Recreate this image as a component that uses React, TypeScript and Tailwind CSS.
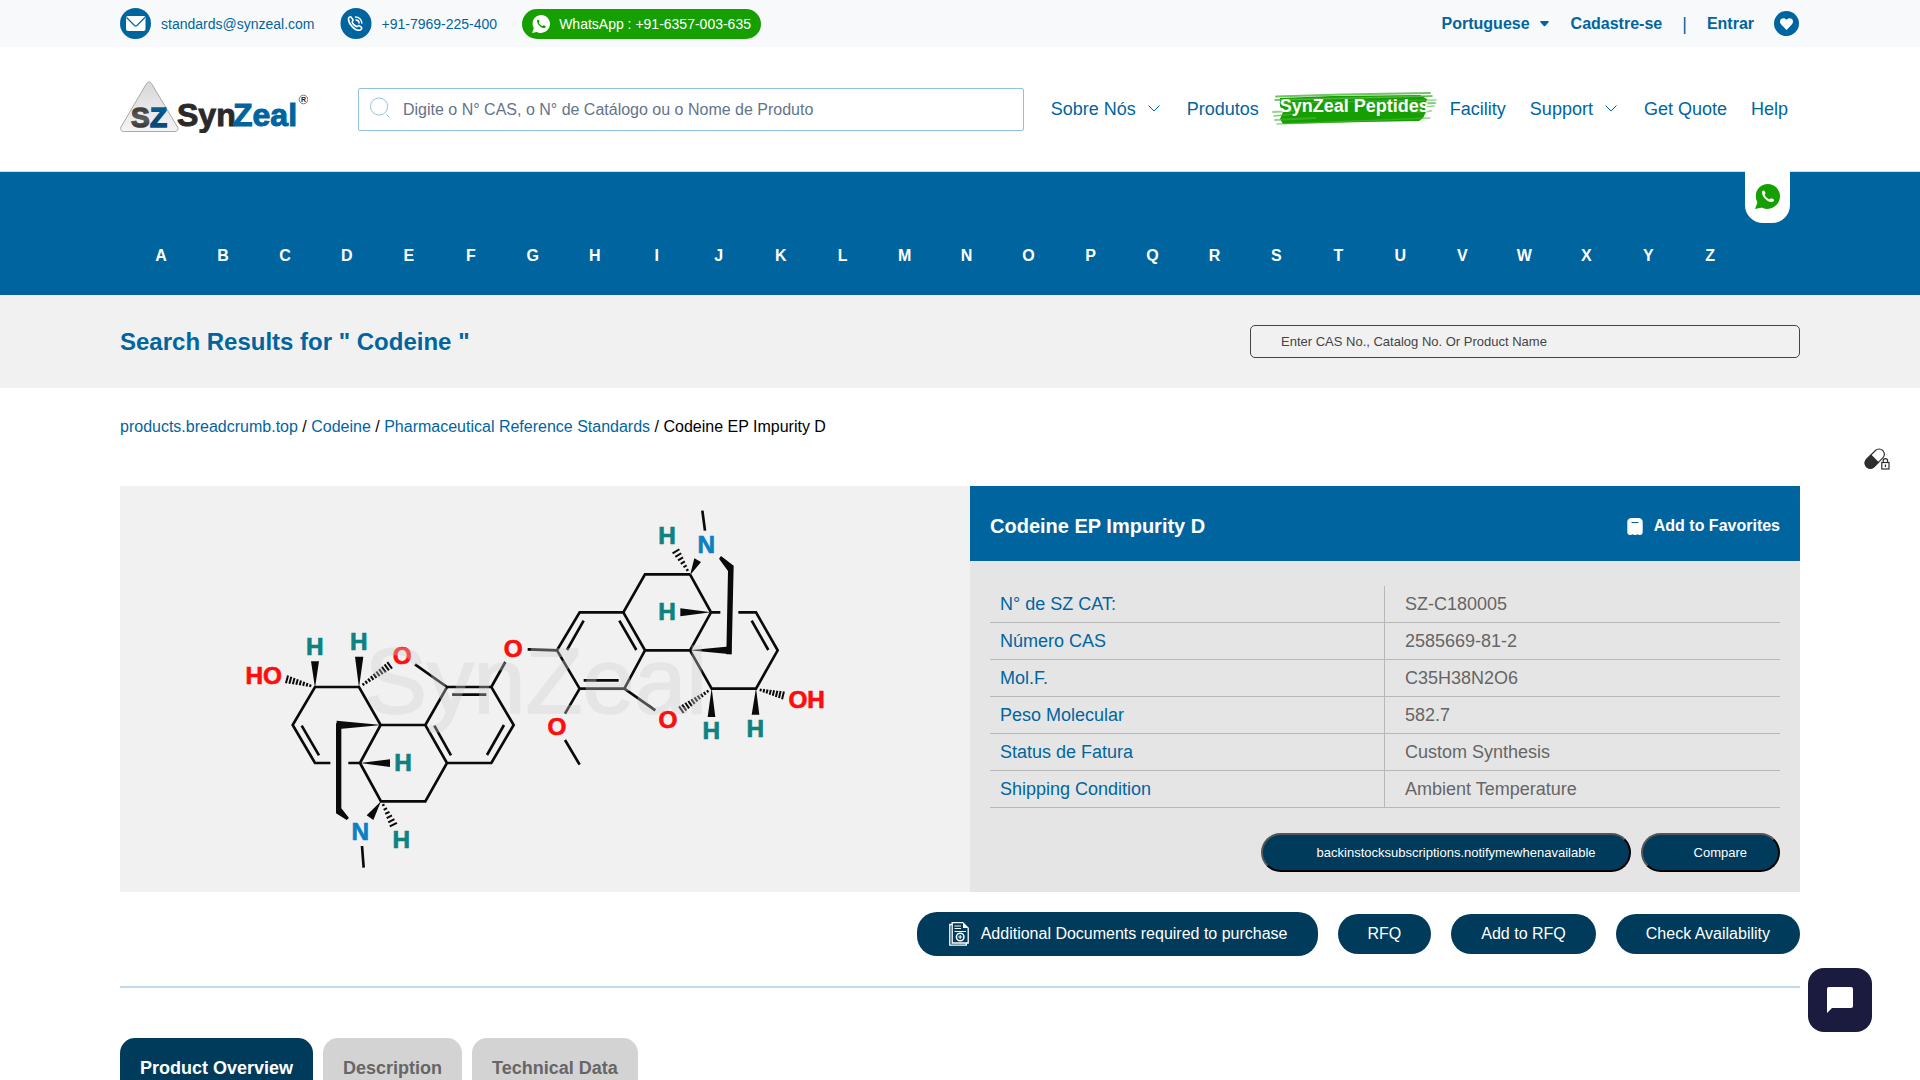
import React from "react";

const letters = "ABCDEFGHIJKLMNOPQRSTUVWXYZ".split("");

const specs = [
  ["N° de SZ CAT:", "SZ-C180005"],
  ["Número CAS", "2585669-81-2"],
  ["Mol.F.", "C35H38N2O6"],
  ["Peso Molecular", "582.7"],
  ["Status de Fatura", "Custom Synthesis"],
  ["Shipping Condition", "Ambient Temperature"],
];

const container = "mx-auto w-full max-w-[1920px] px-[120px]";

function WhatsAppIcon({ className, phone }: { className: string; phone: string }) {
  return (
    <svg viewBox="0 0 25 25" className={className} aria-hidden="true">
      <path
        fill="currentColor"
        d="M12.8 0C6.100 0 .8 5.400 .8 12c0 2.100.5 3.900 1.300 5.600.3.600.3 1.100.1 1.700L0 25l6.100-1.300c.4-.1.800-.1 1.200.1 1.700.8 3.500 1.200 5.500 1.200C19.400 24.500 25 19.200 25 12.300 25 5.500 19.500 0 12.800 0z"
      />
      <path
        fill={phone}
        d="M7 8.200c0-1.200 1.200-2 2-1.700.6.200 1.400 2 1.500 2.600.1.700-1 1.300-.8 1.900.7 1.700 2.600 3.600 4.700 4.300.7.200 1.300-1.100 2-1 .6.100 2.300 1 2.600 1.500.4.700-.8 2.300-2.300 2.300C12.500 18.100 7 13 7 8.200z"
      />
    </svg>
  );
}

function Logo() {
  return (
    <svg viewBox="0 0 188 52" className="h-[52px] w-[188px]" role="img" aria-label="SynZeal">
      <defs>
        <linearGradient id="tri" x1="0" y1="0" x2="0" y2="1">
          <stop offset="0" stopColor="#d8d8d8" />
          <stop offset="1" stopColor="#f4f4f4" />
        </linearGradient>
        <linearGradient id="markS" x1="0" y1="0" x2="0" y2="1">
          <stop offset="0" stopColor="#2e2e2e" />
          <stop offset=".55" stopColor="#5c5c5c" />
          <stop offset="1" stopColor="#1d1d1d" />
        </linearGradient>
        <linearGradient id="markZ" x1="0" y1="0" x2="0" y2="1">
          <stop offset="0" stopColor="#0069a6" />
          <stop offset=".6" stopColor="#0c4676" />
          <stop offset="1" stopColor="#00538a" />
        </linearGradient>
      </defs>
      <path
        d="M26.500 2.500c1-2 4-2 5 0L57.500 46c1.200 2.500 0 4.500-2.500 4.500H3.500C1 50.500 0 48.500 1 46z"
        fill="url(#tri)"
        stroke="#a9a9a9"
      />
      <g fontFamily="Liberation Sans, sans-serif" fontWeight="bold">
        <text x="11" y="46" fontSize="28" fill="url(#markS)" stroke="url(#markS)" strokeWidth="1.500">S</text>
        <text x="30" y="46" fontSize="28" fill="url(#markZ)" stroke="url(#markZ)" strokeWidth="1.500">Z</text>
        <text x="57" y="45" fontSize="32" fill="#2c2a29" stroke="#2c2a29">Syn</text>
        <text x="113" y="45" fontSize="32" fill="#00659f" stroke="#00659f">Zeal</text>
        <text x="183.500" y="21" fontSize="7" textAnchor="middle" fill="#222">R</text>
      </g>
      <circle cx="183.500" cy="18.500" r="4.300" fill="none" stroke="#555" strokeWidth=".8" />
    </svg>
  );
}

function Chevron() {
  return (
    <svg viewBox="0 0 15 12" className="h-3 w-[15px]" fill="none" stroke="#00659f" aria-hidden="true">
      <path d="M.5 2.500L6 8l5.500-5.500" />
    </svg>
  );
}

function NavLink({ label, menu }: { label: string; menu?: boolean }) {
  return (
    <a href="#" className="flex items-center gap-3 text-lg whitespace-nowrap text-[#00659f]">
      {label}
      {menu && <Chevron />}
    </a>
  );
}

function Brush() {
  return (
    <svg viewBox="0 0 165 34" className="absolute -left-2 top-0 h-[34px] w-[165px]" aria-hidden="true">
      <path fill="#169f00" d="M8 6L60 4 148 3l7 4-2 7 1 6-3 6-4 3-54 1-82 2-3-5 3-7-3-6z" />
      <g stroke="#4fb63f" fill="none" strokeLinecap="round">
        <path d="M4 4.500L70 2.500 158 1" strokeWidth="2" opacity=".8" />
        <path d="M3 8L160 4" strokeWidth="1.500" />
        <path d="M8 11L164 8" strokeWidth="1.500" opacity=".6" />
        <path d="M140 12l23-1" strokeWidth="2" opacity=".7" />
        <path d="M145 16l17-2" strokeWidth="1.500" opacity=".6" />
        <path d="M1 20l20-1" strokeWidth="2" opacity=".6" />
        <path d="M140 20l19-1" strokeWidth="2" opacity=".5" />
        <path d="M2 24l20-2" strokeWidth="1.500" opacity=".7" />
        <path d="M3 28l40-2" strokeWidth="2" opacity=".6" />
        <path d="M5 32l80-3 73-3" strokeWidth="1.500" opacity=".6" />
      </g>
    </svg>
  );
}

function Hash({ from, to, n, end = 12 }: { from: number[]; to: number[]; n: number; end?: number }) {
  const dx = to[0] - from[0];
  const dy = to[1] - from[1];
  const len = Math.hypot(dx, dy);
  return (
    <>
      {Array.from({ length: n }, (_, i) => {
        const t = i / (n - 1);
        const h = 4 + (end - 4) * t;
        const x = from[0] + dx * t;
        const y = from[1] + dy * t;
        const ox = (-dy / len) * h;
        const oy = (dx / len) * h;
        return <path key={i} d={`M${x - ox} ${y - oy}L${x + ox} ${y + oy}`} strokeWidth="6" />;
      })}
    </>
  );
}

function Atom({ x, y, children }: { x: number; y: number; children: string }) {
  const fill = children === "H" ? "#0d8280" : children === "N" ? "#0c80c4" : "#ff0d0d";
  return (
    <text x={x} y={y} fill={fill} stroke={fill} strokeWidth="2">
      {children}
    </text>
  );
}

function Molecule() {
  return (
    <svg viewBox="0 -12 1890 1218" className="h-[406px] w-[630px]" role="img" aria-label="Codeine EP Impurity D">
      <g stroke="#0a0a0a" strokeWidth="8" fill="none" fontFamily="Liberation Sans, sans-serif" fontWeight="bold" fontSize="73" textAnchor="middle">
        <path d="M301 819H255L188 705 255 591H387L452 705 390 819H355M215 707L267 796M390 819L453 934H586L651 819 586 705H452M586 705L651 591H784L851 705 784 819H651M667 614H769M613 707L663 796M822 705L771 795M555 523L651 591M784 591L826 516M893 478L981 481M396 1068L401 1133" />
        <g fill="#0a0a0a" stroke="none">
          <path d="M255 593L243 514H267zM387 593L375 500H400zM390 819L480 808V831zM455 705L320 692V718zM453 934L410 976 430 990z" />
          <path d="M318 700H334V955L357 984 350 990 318 970z" />
        </g>
        <Hash from={[241, 587]} to={[171, 568]} n={8} />
        <Hash from={[400, 583]} to={[479, 526]} n={10} />
        <Hash from={[460, 945]} to={[490, 1004]} n={6} />
        <Atom x={254} y={495}>H</Atom>
        <Atom x={386} y={481}>H</Atom>
        <Atom x={101} y={583}>HO</Atom>
        <Atom x={517} y={523}>O</Atom>
        <Atom x={850} y={501}>O</Atom>
        <Atom x={519} y={844}>H</Atom>
        <Atom x={391} y={1049}>N</Atom>
        <Atom x={514} y={1075}>H</Atom>
        <g transform="translate(870 0)">
          <path d="M510 253H375L310 367H179L111 481 179 596H313L375 481 310 367M191 392L141 480M298 392L349 480M191 571H296M375 481H510L573 367 510 253M573 367H601M655 367H708L773 481 708 596H575L510 481M695 392L745 480M179 596L135 671M135 750L179 824M313 596L406 661M547 62L555 122" />
          <g fill="#0a0a0a" stroke="none">
            <path d="M573 367L481 355V379zM575 594L563 681H586zM708 594L695 674H718zM507 481L634 469V493zM510 256L523 205 543 216z" />
            <path d="M603 198L641 227 635 493H619L624 243 597 206z" />
          </g>
          <Hash from={[502, 240]} to={[468, 184]} n={6} />
          <Hash from={[563, 604]} to={[484, 659]} n={10} />
          <Hash from={[722, 600]} to={[789, 616]} n={8} />
          <Atom x={441} y={163}>H</Atom>
          <Atom x={559} y={188}>N</Atom>
          <Atom x={441} y={391}>H</Atom>
          <Atom x={444} y={713}>O</Atom>
          <Atom x={111} y={735}>O</Atom>
          <Atom x={574} y={748}>H</Atom>
          <Atom x={706} y={742}>H</Atom>
          <Atom x={860} y={655}>OH</Atom>
        </g>
      </g>
      <text x="404" y="668" fontSize="280" fontFamily="Liberation Sans, sans-serif" fill="#d0d0d0" stroke="#d0d0d0" strokeWidth="5" opacity=".35">
        SynZeal
      </text>
    </svg>
  );
}

function TopBar() {
  return (
    <div className="bg-[#f8f9fb]">
      <div className={`${container} flex h-[47px] items-center justify-between text-[#00659f]`}>
        <div className="flex items-center gap-[25px] text-sm">
          <a href="mailto:standards@synzeal.com" className="flex items-center gap-[10px]">
            <svg viewBox="0 0 31 31" className="size-[31px]" aria-hidden="true">
              <circle cx="15.500" cy="15.500" r="15.500" fill="#00659f" />
              <rect x="6" y="8" width="19.500" height="15" rx="2" fill="#fff" />
              <path d="M6.500 9.500l8 8c.7.600 1.700.6 2.400 0l8-8" fill="none" stroke="#00659f" strokeWidth="1.200" />
            </svg>
            standards@synzeal.com
          </a>
          <a href="tel:+917969225400" className="flex items-center gap-[10px]">
            <svg viewBox="0 0 32 31" className="h-[31px] w-8" fill="none" stroke="#fff" aria-hidden="true">
              <circle cx="16" cy="15.500" r="15.500" fill="#00659f" stroke="none" />
              <path
                d="M8.500 10.500c0-1 1.500-2.200 2.500-1.500l2 2.700c.5.800-1 1.700-.8 2.400.5 1.800 2.500 3.800 4.500 4.500.8.200 1.700-1.500 2.500-1l2.300 1.700c.8.800-.6 2.800-1.800 3-5 .4-11.400-6.300-11.200-11.800z"
                strokeWidth="1.600"
              />
              <path d="M15.500 9c3.400 0 6.200 2.500 6.400 6M16 12c1.800.1 3 1.300 3.100 3" strokeWidth="1.500" strokeLinecap="round" />
            </svg>
            +91-7969-225-400
          </a>
          <a href="#" className="flex h-[30px] items-center gap-[9px] rounded-full bg-[#169f00] px-[10px] text-white">
            <WhatsAppIcon className="size-[18px]" phone="#169f00" />
            WhatsApp : +91-6357-003-635
          </a>
        </div>
        <div className="flex items-center text-base font-bold">
          <button type="button" className="flex items-center gap-[10px] font-bold">
            Portuguese
            <svg viewBox="0 0 9 6" className="h-[6px] w-[9px]" aria-hidden="true">
              <path d="M1 0h7c1 0 1 .8.600 1.200L5.200 5c-.4.400-1 .4-1.400 0L.4 1.200C0 .8 0 0 1 0z" fill="#00659f" />
            </svg>
          </button>
          <a href="#" className="ml-[22px]">Cadastre-se</a>
          <span className="mx-5 text-lg font-normal">|</span>
          <a href="#">Entrar</a>
          <a href="#" aria-label="Favorites" className="ml-5 pr-px">
            <svg viewBox="0 0 25 25" className="size-[25px]" aria-hidden="true">
              <circle cx="12.500" cy="12.500" r="12.500" fill="#00659f" />
              <path d="M12.500 19L7 13.300c-1.600-1.800-1.300-4.300.4-5.500 1.700-1.100 3.900-.7 5.100 1 1.200-1.700 3.400-2.100 5.100-1 1.700 1.200 2 3.700.4 5.500z" fill="#fff" />
            </svg>
          </a>
        </div>
      </div>
    </div>
  );
}

function Header() {
  return (
    <header className="border-b border-[#cfdfea]">
      <div className={`${container} flex h-[124px] items-center`}>
        <a href="#" className="mt-[-4px] shrink-0">
          <Logo />
        </a>
        <form className="ml-[50px] flex h-[43px] min-w-0 flex-1 items-center gap-3 rounded-[2px] border border-[#8fc1dd] pl-[11px]">
          <svg viewBox="0 0 22 22" className="mt-[-4px] size-[21px]" fill="none" stroke="#8fc1dd" aria-hidden="true">
            <circle cx="9.500" cy="10" r="9" />
            <path d="M17 18l3.500 3.500" />
          </svg>
          <input
            type="text"
            aria-label="Buscar"
            placeholder="Digite o N° CAS, o N° de Catálogo ou o Nome de Produto"
            className="min-w-0 flex-1 bg-transparent pt-[2px] text-base outline-none placeholder:text-[#64748b]"
          />
        </form>
        <nav className="ml-[27px] mr-[12px] flex items-center gap-6">
          <NavLink label="Sobre Nós" menu />
          <NavLink label="Produtos" />
          <a href="#" className="relative -mx-[3px] flex h-[34px] items-start text-lg font-bold whitespace-nowrap text-white">
            <Brush />
            <span className="relative">SynZeal Peptides</span>
          </a>
          <NavLink label="Facility" />
          <NavLink label="Support" menu />
          <NavLink label="Get Quote" />
          <NavLink label="Help" />
        </nav>
      </div>
    </header>
  );
}

export default function App() {
  return (
    <div className="relative h-screen overflow-hidden bg-white font-['Liberation_Sans',sans-serif] text-base text-black">
      <TopBar />
      <Header />

      <section className="bg-[#00659f]">
        <div className={`${container} relative flex h-[123px] items-start pt-[72px]`}>
          <nav className="mr-[59px] ml-[10px] flex flex-1">
            {letters.map((l) => (
              <a key={l} href="#" className="flex-1 text-center font-bold text-white">
                {l}
              </a>
            ))}
          </nav>
          <a
            href="#"
            aria-label="WhatsApp"
            className="absolute -top-px right-[130px] flex h-[52px] w-[45px] items-center justify-center rounded-b-[18px] bg-white pb-[2px]"
          >
            <WhatsAppIcon className="size-[25px] text-[#169f00]" phone="#fff" />
          </a>
        </div>
      </section>

      <section className="bg-[#f1f1f1]">
        <div className={`${container} flex h-[93px] items-center justify-between`}>
          <h1 className="text-2xl font-bold text-[#00659f]">Search Results for " Codeine "</h1>
          <input
            type="text"
            aria-label="Search products"
            placeholder="Enter CAS No., Catalog No. Or Product Name"
            className="h-[33px] w-[550px] rounded-[5px] border border-[#444] bg-transparent pl-[30px] text-[13px] placeholder:text-[#444]"
          />
        </div>
      </section>

      <main className={container}>
        <nav className="pt-[27px] text-base" aria-label="Breadcrumb">
          <a href="#" className="text-[#00659f]">products.breadcrumb.top</a> /{" "}
          <a href="#" className="text-[#00659f]">Codeine</a> /{" "}
          <a href="#" className="text-[#00659f]">Pharmaceutical Reference Standards</a> / Codeine EP Impurity D
        </nav>

        <div className="mt-[47px] flex">
          <div className="flex flex-1 items-center justify-center bg-[#f1f1f1]">
            <Molecule />
          </div>
          <div className="w-[830px] bg-[#e5e5e5]">
            <div className="flex h-[75px] items-center justify-between bg-[#00659f] px-5 pt-[5px] text-white">
              <h2 className="text-xl font-bold">Codeine EP Impurity D</h2>
              <button type="button" className="flex items-center gap-[11px] font-bold">
                <svg viewBox="0 0 16 17" className="h-[17px] w-4" aria-hidden="true">
                  <path
                    fill="#fff"
                    d="M4.500 0h7C14 .2 15.700 1.500 15.700 4v10c0 2-1.200 3-2.700 3-1.200 0-1.700-.8-2.500-.8-.7 0-1.200.8-2.500.8s-1.800-.8-2.500-.8c-.8 0-1.300.8-2.500.8-1.500 0-2.700-1-2.700-3V4C.3 1.500 2 .2 4.500 0z"
                  />
                  <path d="M4.500 4.500h7" stroke="#00659f" />
                </svg>
                Add to Favorites
              </button>
            </div>
            <div className="px-5 pt-[25px] pb-5">
              <table className="w-full table-fixed border-separate border-spacing-0 text-lg leading-[26px]">
                <tbody>
                  {specs.map(([k, v]) => (
                    <tr key={k}>
                      <th scope="row" className="h-[37px] border-r border-b border-[#b8b8b8] px-[10px] py-[5px] text-left font-normal text-[#00659f]">
                        {k}
                      </th>
                      <td className="h-[37px] border-b border-[#b8b8b8] px-5 py-[5px] text-[#666]">{v}</td>
                    </tr>
                  ))}
                </tbody>
              </table>
              <div className="mt-[25px] flex justify-end gap-[10px] text-[13px] text-white">
                <button type="button" className="h-[39px] rounded-[20px] border-2 border-t-[#555] border-r-black border-b-black border-l-[#555] bg-[#003b5c] pr-[33px] pl-[54px]">
                  backinstocksubscriptions.notifymewhenavailable
                </button>
                <button type="button" className="h-[39px] rounded-[20px] border-2 border-t-[#555] border-r-black border-b-black border-l-[#555] bg-[#003b5c] pr-[31px] pl-[51px]">
                  Compare
                </button>
              </div>
            </div>
          </div>
        </div>

        <div className="mt-5 flex items-center justify-end gap-5 text-white">
          <button type="button" className="flex h-11 items-center gap-3 rounded-[20px] bg-[#003b5c] pr-[30px] pl-8">
            <svg viewBox="0 0 20 24" className="h-6 w-5" fill="none" stroke="#fff" aria-hidden="true">
              <path d="M3 2.500H.8v20.700h16.500V21" strokeWidth="1.300" />
              <path d="M14 .7H3.200v20.300h16V6" strokeWidth="1.300" />
              <path d="M14 0v6h6z" fill="#fff" stroke="none" />
              <path d="M5.500 4H12M5.500 6.500H12M5.500 9.500H17" />
              <circle cx="11.200" cy="15" r="3.800" strokeWidth="1.500" />
              <path d="M11.200 13v4M9.200 15h4" />
            </svg>
            Additional Documents required to purchase
          </button>
          <button type="button" className="h-10 rounded-[20px] bg-[#003b5c] px-[30px]">RFQ</button>
          <button type="button" className="h-10 rounded-[20px] bg-[#003b5c] px-[30px]">Add to RFQ</button>
          <button type="button" className="h-10 rounded-[20px] bg-[#003b5c] px-[30px]">Check Availability</button>
        </div>

        <hr className="mt-[30px] border-t-2 border-[#c2dae8]" />

        <div role="tablist" className="mt-[50px] flex gap-[10px] text-lg font-bold">
          <button type="button" role="tab" aria-selected="true" className="h-[60px] rounded-t-[15px] bg-[#003b5c] px-5 text-white">
            Product Overview
          </button>
          <button type="button" role="tab" aria-selected="false" className="h-[60px] rounded-t-[15px] bg-[#d3d3d3] px-5 text-[#666]">
            Description
          </button>
          <button type="button" role="tab" aria-selected="false" className="h-[60px] rounded-t-[15px] bg-[#d3d3d3] px-5 text-[#666]">
            Technical Data
          </button>
        </div>
      </main>

      <a href="#" aria-label="Compare medicines" className="absolute top-[447px] right-[30px]">
        <svg viewBox="0 0 26 24" className="h-6 w-[26px]" aria-hidden="true">
          <g transform="rotate(-45 10.500 11.500)">
            <rect x="-1" y="6.500" width="23" height="10.500" rx="5.200" fill="#fff" stroke="#2f2f2f" strokeWidth="1.200" />
            <path d="M11 6H4.500a5.700 5.700 0 0 0 0 11.500H11z" fill="#2f2f2f" />
          </g>
          <rect x="17.800" y="15.500" width="7.200" height="6.500" fill="#fff" stroke="#2f2f2f" strokeWidth="1.200" />
          <path d="M19.200 15.500v-1.700c0-3 4.400-3 4.400 0v1.700M21.400 17.500v2.500" fill="none" stroke="#2f2f2f" strokeWidth="1.200" />
        </svg>
      </a>

      <button
        type="button"
        aria-label="Chat"
        className="absolute right-12 bottom-12 flex size-16 items-center justify-center rounded-[16px] bg-[#1b1a3f]"
      >
        <svg viewBox="0 0 28 28" className="size-7" aria-hidden="true">
          <path d="M3 1h22c1.200 0 2 .8 2 2v17c0 1.200-.8 2-2 2H6l-5 5V3c0-1.200.8-2 2-2z" fill="#fff" />
        </svg>
      </button>
    </div>
  );
}
